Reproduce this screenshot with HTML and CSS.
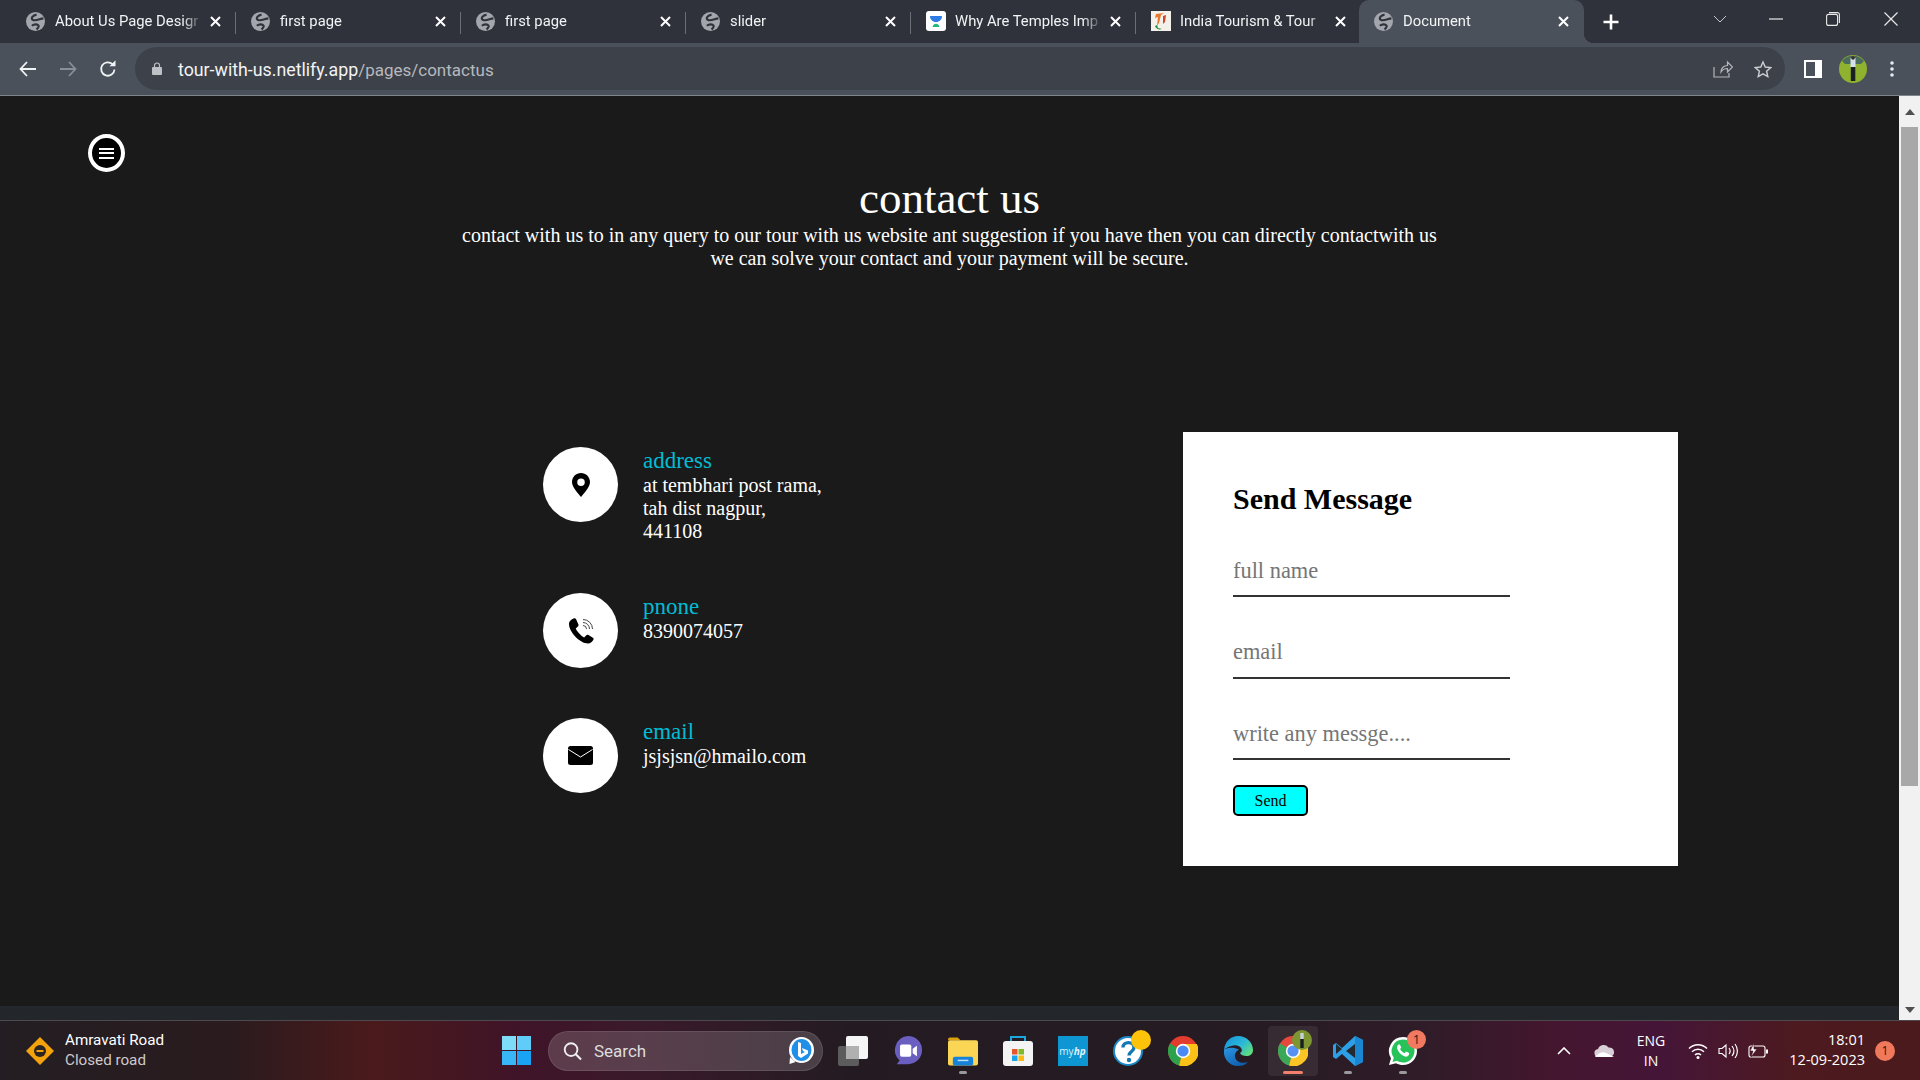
FILE: index.html
```html
<!DOCTYPE html>
<html lang="en">
<head>
  <meta charset="UTF-8" />
  <meta name="viewport" content="width=device-width, initial-scale=1" />
  <title>Document</title>
  <link rel="stylesheet" href="styles.css">
</head>
<body>
  <svg class="defs" width="0" height="0">
    <defs>
      <linearGradient id="edgeTop" x1="0" y1="0" x2="1" y2="0.700">
        <stop offset="0" stop-color="#1590dc"/>
        <stop offset="0.600" stop-color="#2bb8d8"/>
        <stop offset="1" stop-color="#5fdc80"/>
      </linearGradient>
      <linearGradient id="edgeLow" x1="0" y1="0" x2="0.800" y2="1">
        <stop offset="0" stop-color="#2a96e4"/>
        <stop offset="1" stop-color="#0d5aa8"/>
      </linearGradient>
    </defs>
    <symbol id="globe" viewBox="0 0 18 18">
      <circle cx="9" cy="9" r="9" fill="#a3a7ad"/>
      <path d="M10 2.500C6.500 3 4 6 6.500 7.500S13 6.500 16.500 6M5.500 13c2.500-2 5.500-1.500 6.500 0 .5 1-1 2.500-2 3.500" stroke="#2f323b" stroke-width="2" fill="none"/>
    </symbol>
    <symbol id="close" viewBox="0 0 11 11">
      <path d="M1 1l9 9M10 1l-9 9" stroke="#fff" stroke-width="2" fill="none"/>
    </symbol>
    <symbol id="chrome" viewBox="0 0 30 30">
      <circle cx="15" cy="15" r="15" fill="#e33b2e"/>
      <path d="M15 15L2 7.500A15 15 0 0 0 11 29.500z" fill="#2ba24c"/>
      <path d="M15 8h13.800A15 15 0 0 1 11 29.500L15 15z" fill="#fbc116"/>
      <circle cx="15" cy="15" r="7.200" fill="#fff"/>
      <circle cx="15" cy="15" r="5.600" fill="#4a8af4"/>
    </symbol>
  </svg>

  <div class="tabstrip">
    <div class="tab">
      <svg class="favicon"><use href="#globe"/></svg>
      <span class="tab-title">About Us Page Desigr</span>
      <svg class="tab-close"><use href="#close"/></svg>
    </div>
    <div class="tab">
      <svg class="favicon"><use href="#globe"/></svg>
      <span class="tab-title">first page</span>
      <svg class="tab-close"><use href="#close"/></svg>
    </div>
    <div class="tab">
      <svg class="favicon"><use href="#globe"/></svg>
      <span class="tab-title">first page</span>
      <svg class="tab-close"><use href="#close"/></svg>
    </div>
    <div class="tab">
      <svg class="favicon"><use href="#globe"/></svg>
      <span class="tab-title">slider</span>
      <svg class="tab-close"><use href="#close"/></svg>
    </div>
    <div class="tab">
      <svg class="favicon favicon-big" viewBox="0 0 20 20">
        <rect width="20" height="20" rx="3" fill="#fff"/>
        <path d="M4 5h12c0 3.500-2.500 6-6 6s-6-2.500-6-6z" fill="#2f7be6"/>
        <path d="M6.500 16c0.500-2 2-3.200 3.500-3.200s3 1.200 3.500 3.200z" fill="#1fb978"/>
      </svg>
      <span class="tab-title">Why Are Temples Imp</span>
      <svg class="tab-close"><use href="#close"/></svg>
    </div>
    <div class="tab tab-last">
      <svg class="favicon favicon-big" viewBox="0 0 20 20">
        <rect width="20" height="20" fill="#f4f1ea"/>
        <path d="M5 3l8-1-3 2-2 8-2 3 1-9-3 1z" fill="#e8762c"/>
        <path d="M12 5l3-1-1 7-2 2z" fill="#c9472b"/>
        <path d="M4 15c1 3 4 4 7 3l-4-1-1-3z" fill="#2d8c3c"/>
      </svg>
      <span class="tab-title">India Tourism &amp; Tour</span>
      <svg class="tab-close"><use href="#close"/></svg>
    </div>
    <div class="tab tab-active">
      <svg class="favicon"><use href="#globe"/></svg>
      <span class="tab-title">Document</span>
      <svg class="tab-close"><use href="#close"/></svg>
    </div>
    <svg class="new-tab" viewBox="0 0 16 16"><path d="M8 0.500v15M0.500 8h15" stroke="#fff" stroke-width="2.600" fill="none"/></svg>
    <div class="window-controls">
      <svg class="win-chevron" viewBox="0 0 14 8"><path d="M1 1l6 6 6-6" stroke="#c4c7cc" fill="none"/></svg>
      <svg class="win-min" viewBox="0 0 14 2"><path d="M0 1h14" stroke="#e8e8e8" stroke-width="1.200"/></svg>
      <svg class="win-restore" viewBox="0 0 14 14"><rect x="0.600" y="2.400" width="11" height="11" rx="2" fill="none" stroke="#e8e8e8" stroke-width="1.100"/><path d="M3 0.600h8.400a2 2 0 0 1 2 2V11" fill="none" stroke="#e8e8e8" stroke-width="1.100"/></svg>
      <svg class="win-close" viewBox="0 0 14 14"><path d="M0.500 0.500l13 13M13.500 0.500l-13 13" stroke="#e8e8e8" stroke-width="1.200"/></svg>
    </div>
  </div>

  <div class="toolbar">
    <div class="nav-buttons">
      <svg viewBox="0 0 18 16"><path d="M8 1L1.500 8 8 15M1.500 8H17" stroke="#f1f3f4" stroke-width="1.800" fill="none"/></svg>
      <svg class="nav-off" viewBox="0 0 18 16"><path d="M10 1l6.500 7-6.500 7M16.500 8H1" stroke="#8a8e95" stroke-width="1.800" fill="none"/></svg>
      <svg viewBox="0 0 18 18"><path d="M15.500 9.500A6.700 6.700 0 1 1 13.500 4.200" stroke="#f1f3f4" stroke-width="1.800" fill="none"/><path d="M10.500 6.200h6v-6z" fill="#f1f3f4"/></svg>
    </div>
    <div class="omnibox">
      <svg class="lock" viewBox="0 0 10 13"><path d="M2.500 6V3.500a2.500 2.500 0 0 1 5 0V6" stroke="#bdc1c6" stroke-width="1.200" fill="none"/><rect y="5" width="10" height="8" rx="1" fill="#bdc1c6"/></svg>
      <span class="url">tour-with-us.netlify.app<span class="url-path">/pages/contactus</span></span>
      <svg class="omni-share" viewBox="0 0 20 18"><path d="M1 7v10h15v-4M8 12c0-4 3-6.500 6.500-6.500V2l5 5-5 5V8.500C12 8.500 9.500 9.500 8 12z" stroke="#b4b7bc" stroke-width="1.200" fill="none"/></svg>
      <svg class="omni-star" viewBox="0 0 20 19"><path d="M10 1.800l2.500 5.500 6 .7-4.500 4 1.300 5.900-5.300-3-5.300 3L6 12l-4.500-4 6-.7z" stroke="#c9ccd0" stroke-width="1.600" fill="none"/></svg>
    </div>
    <svg class="side-panel" viewBox="0 0 18 18"><rect width="18" height="18" fill="#fff"/><rect x="2" y="2" width="9" height="14" fill="#4b515b"/></svg>
    <svg class="avatar" viewBox="0 0 28 28">
      <circle cx="14" cy="14" r="14" fill="#8fb32e"/>
      <path d="M3 6a14 14 0 0 1 22 0l-3 3H6z" fill="#4b6b5c"/>
      <rect x="11.500" y="3" width="5" height="9" fill="#d5e2ee"/>
      <circle cx="14" cy="3" r="1.800" fill="#3a2a22"/>
      <rect x="11.800" y="12" width="4.500" height="14" fill="#1a1f22"/>
    </svg>
    <svg class="kebab" viewBox="0 0 4 16"><circle cx="2" cy="2" r="1.800" fill="#e8eaed"/><circle cx="2" cy="8" r="1.800" fill="#e8eaed"/><circle cx="2" cy="14" r="1.800" fill="#e8eaed"/></svg>
  </div>

  <div class="viewport">
    <main class="page">
      <button class="menu-toggle" aria-label="menu"><span></span><span></span><span></span></button>

      <div class="intro">
        <h1>contact us</h1>
        <p>contact with us to in any query to our tour with us website ant suggestion if you have then you can directly contactwith us<br>we can solve your contact and your payment will be secure.</p>
      </div>

      <div class="contact">
        <div class="info">
          <div class="info-item">
            <div class="info-icon">
              <svg viewBox="0 0 24 32" class="icon-pin"><path fill-rule="evenodd" d="M12 0C5.400 0 0 5.300 0 12c0 7 8 15 12 20 4-5 12-13 12-20C24 5.300 18.600 0 12 0zm0 7.200a5 5 0 1 1 0 10 5 5 0 0 1 0-10z"/></svg>
            </div>
            <div class="info-text">
              <h3>address</h3>
              <p>at tembhari post rama,<br>tah dist nagpur,<br>441108</p>
            </div>
          </div>
          <div class="info-item">
            <div class="info-icon">
              <svg viewBox="0 0 26 26" class="icon-phone">
                <path d="M5.500 0.500c-2 1-4.500 2.500-4.500 5.500 0 8 11 19.500 19 19.500 2.500 0 4.500-2 5.500-4 0.500-1-0.300-1.500-1-2l-4-2.500c-1-0.600-1.700-0.300-2.400 0.400l-2 2c-3-1.500-7-6-8.400-9l2.200-2c0.700-0.700 0.800-1.400 0.400-2.200L8 1c-0.600-1-1.500-1-2.500-0.500z"/>
                <path d="M15 7.500a3.500 3.500 0 0 1 3.500 3.500M15 4.500a6.500 6.500 0 0 1 6.500 6.500M15 1.500a9.500 9.500 0 0 1 9.500 9.500" fill="none" stroke="#444" stroke-width="1"/>
              </svg>
            </div>
            <div class="info-text">
              <h3>pnone</h3>
              <p>8390074057</p>
            </div>
          </div>
          <div class="info-item">
            <div class="info-icon">
              <svg viewBox="0 0 25 19" class="icon-mail"><rect width="25" height="19" rx="2.500"/><path d="M0.500 3.500l12 7.500 12-7.500" fill="none" stroke="#fff" stroke-width="1"/></svg>
            </div>
            <div class="info-text">
              <h3>email</h3>
              <p>jsjsjsn@hmailo.com</p>
            </div>
          </div>
        </div>

        <form class="message-card">
          <h2>Send Message</h2>
          <input type="text" placeholder="full name" />
          <input type="text" placeholder="email" />
          <input type="text" placeholder="write any messge...." />
          <button type="button" class="send-btn">Send</button>
        </form>
      </div>

      <div class="page-foot"></div>
    </main>

    <div class="scrollbar">
      <div class="scroll-btn"><span class="arrow-up"></span></div>
      <div class="scroll-track"><div class="scroll-thumb"></div></div>
      <div class="scroll-btn scroll-btn-down"><span class="arrow-down"></span></div>
    </div>
  </div>

  <footer class="taskbar">
    <div class="widget">
      <svg class="widget-icon" viewBox="0 0 28 28">
        <path d="M14 0l14 14-14 14L0 14z" fill="#f5a30c"/>
        <circle cx="14" cy="14" r="6" fill="#2b2420"/>
        <rect x="10.500" y="13" width="7" height="2" fill="#f5a30c"/>
      </svg>
      <div class="widget-text">
        <div>Amravati Road</div>
        <div class="widget-sub">Closed road</div>
      </div>
    </div>

    <svg class="start" viewBox="0 0 29 29">
      <rect width="14" height="14" fill="#7fdcf8"/>
      <rect x="15" width="14" height="14" fill="#5fcdf8"/>
      <rect y="15" width="14" height="14" fill="#38b6f5"/>
      <rect x="15" y="15" width="14" height="14" fill="#1aa3f2"/>
    </svg>

    <div class="search">
      <svg class="search-glass" viewBox="0 0 20 20"><circle cx="8.500" cy="8.500" r="6.700" stroke="#eee" stroke-width="2" fill="none"/><path d="M13.500 13.500l5.500 5.500" stroke="#eee" stroke-width="2.200"/></svg>
      <span>Search</span>
      <svg class="search-bing" viewBox="0 0 25 28">
        <ellipse cx="12.500" cy="13" rx="12.500" ry="13" fill="#fff"/>
        <path d="M1 20l-0.500 7 6-2z" fill="#fff"/>
        <ellipse cx="12.500" cy="13" rx="10" ry="11" fill="#1f8fe8"/>
        <path d="M9 5l3 1v11l4-2-2-1-1-3 6 2.500v3L12 21l-3-2z" fill="#fff"/>
      </svg>
    </div>

    <div class="apps">
      <div class="app">
        <svg viewBox="0 0 30 30"><rect x="0" y="10" width="21" height="20" rx="2" fill="#5c5c5c"/><rect x="8" y="0" width="22" height="23" rx="2" fill="#f5f5f5"/><rect x="8" y="10" width="13" height="13" fill="#b0b0b0"/></svg>
      </div>
      <div class="app">
        <svg viewBox="0 0 30 32"><path d="M15 0a15 15 0 0 1 0 30H3l3-4A15 15 0 0 1 15 0z" fill="#6a5fc0"/><rect x="6.500" y="9" width="12" height="13" rx="2" fill="#fff"/><path d="M20 13.500l4.500-3v11l-4.500-3z" fill="#fff"/></svg>
      </div>
      <div class="app app-open">
        <svg viewBox="0 0 31 30"><path d="M0 3a2 2 0 0 1 2-2h8l3 3H0z" fill="#d9a00f"/><rect y="4" width="31" height="26" rx="2" fill="#fbd655"/><rect x="5" y="21" width="21" height="9" rx="2" fill="#1683d8"/><rect x="10" y="24" width="11" height="1.500" fill="#bfe2fa"/></svg>
      </div>
      <div class="app">
        <svg viewBox="0 0 30 30"><path d="M8 6V1h14v5" fill="none" stroke="#1aa7e0" stroke-width="2"/><rect y="5" width="30" height="25" rx="3" fill="#f4f4f4"/><rect x="9" y="13" width="5.500" height="5.500" fill="#e8542c"/><rect x="15.500" y="13" width="5.500" height="5.500" fill="#7fba2a"/><rect x="9" y="19.500" width="5.500" height="5.500" fill="#1aa3ea"/><rect x="15.500" y="19.500" width="5.500" height="5.500" fill="#fdb90f"/></svg>
      </div>
      <div class="app">
        <div class="myhp">my<em>hp</em></div>
      </div>
      <div class="app">
        <svg viewBox="0 0 30 30"><circle cx="15" cy="15" r="14" fill="#fff" stroke="#1a88c8" stroke-width="2"/><path d="M10 11.500c0-6.500 11-6.500 11 0 0 4-5 4-5 8" fill="none" stroke="#1278b4" stroke-width="3.400"/><circle cx="16" cy="24" r="2.200" fill="#1278b4"/></svg>
        <span class="app-dot"></span>
      </div>
      <div class="app">
        <svg><use href="#chrome"/></svg>
      </div>
      <div class="app">
        <svg viewBox="0 0 30 30">
          <path d="M1 14C2 5 8 0 15 0c9 0 15 7 15 14 0 4-3 6-6.500 6-3 0-6-1-6.500-3 2-1 2.500-3 1-5-2-3-6-3.500-10-2-3 1-6 2-7 4z" fill="url(#edgeTop)"/>
          <path d="M1 14c-1 8 5 16 14 16 4 0 7-1 10-4-6 2-12 0-13-5-.6-3 1-6 4-7.500C10 10.500 2 12 1 14z" fill="url(#edgeLow)"/>
        </svg>
      </div>
      <div class="app app-active">
        <svg><use href="#chrome"/></svg>
        <svg class="app-avatar" viewBox="0 0 20 20"><circle cx="10" cy="10" r="10" fill="#7d9631"/><rect x="8.300" y="3" width="3.400" height="6" fill="#c5d2dc"/><rect x="8.300" y="9" width="3.400" height="9" fill="#1a1f22"/></svg>
      </div>
      <div class="app app-open">
        <svg viewBox="0 0 30 30"><path d="M22 0l8 4v22l-8 4-13-12-6 5-3-2v-12l3-2 6 5z" fill="#2c9fe6"/><path d="M22 8l-9 7 9 7z" fill="#24292f"/><path d="M22 0l8 4v22l-8 4z" fill="#1a85d0"/><path d="M3 8l6 5-6 5z" fill="#24292f"/></svg>
      </div>
      <div class="app app-open">
        <svg viewBox="0 0 30 30"><path d="M15 1a14 14 0 0 1 0 28c-2.500 0-5-.6-7-1.800L1 29l2-6.700A14 14 0 0 1 15 1z" fill="#fff"/><path d="M15 3.500a11.500 11.500 0 0 1 0 23c-2.200 0-4.300-.6-6-1.700l-4.500 1.200 1.300-4.300A11.500 11.500 0 0 1 15 3.500z" fill="#27c35a"/><path d="M10.500 8.500c-1.500 1-2 3-1 5 1.500 3.500 4.500 6 7.500 7 2 .5 3.500-.5 4-2l.2-1.500-3.200-1.500-1.400 1.700c-2-.8-3.500-2.300-4.500-4.300l1.200-1.400L11.800 8.500z" fill="#fff"/></svg>
        <span class="app-badge">1</span>
      </div>
    </div>

    <div class="tray">
      <svg class="tray-up" viewBox="0 0 14 8"><path d="M1 7l6-6 6 6" stroke="#fff" stroke-width="1.600" fill="none"/></svg>
      <svg class="tray-cloud" viewBox="0 0 20 13"><path d="M5 13a4 4 0 0 1-1-8 6 6 0 0 1 10.500-1.500A4.500 4.500 0 0 1 16 13z" fill="#d8d0d6"/><path d="M1 13c3-4 8-6 11-4l8 4z" fill="#fff"/></svg>
      <div class="tray-lang">ENG<br>IN</div>
      <svg class="tray-wifi" viewBox="0 0 20 16"><path d="M1 5.500c5-5 13-5 18 0M4 8.800c3.500-3.500 8.500-3.500 12 0M7 12c1.700-1.700 4.300-1.700 6 0" fill="none" stroke="#fff" stroke-width="1.500"/><circle cx="10" cy="14.500" r="1.500" fill="#fff"/></svg>
      <svg class="tray-sound" viewBox="0 0 20 16"><path d="M1 5.500h3L8 2v12l-4-3.500H1z" fill="none" stroke="#fff" stroke-width="1.100"/><path d="M11 5c1.400 1.800 1.400 4.200 0 6M14 3c2.400 3 2.400 7 0 10M17 1c3.200 4 3.200 10 0 14" fill="none" stroke="#fff" stroke-width="1.200"/></svg>
      <svg class="tray-battery" viewBox="0 0 20 16"><rect x="1" y="3" width="16" height="11" rx="2" fill="none" stroke="#fff" stroke-width="1.100"/><rect x="18" y="6.500" width="2" height="4" fill="#fff"/><path d="M6 0L2 8h3l-2 6 6-8H6z" fill="#fff" stroke="#3f1526" stroke-width="0.600"/></svg>
      <div class="tray-clock">18:01<br>12-09-2023</div>
      <span class="tray-badge">1</span>
    </div>
  </footer>
</body>
</html>
```

FILE: styles.css
```css
* {
  box-sizing: border-box;
}
html, body {
  height: 100%;
}
body {
  margin: 0;
  display: flex;
  flex-direction: column;
  height: 1080px;
  overflow: hidden;
  font-family: "Liberation Serif", serif;
  background: #1a1a1a;
}
.defs {
  position: absolute;
}

/* browser tabs */
.tabstrip {
  height: 43px;
  flex: none;
  display: flex;
  align-items: center;
  padding-left: 11px;
  background: #2f323b;
  font-family: Roboto, sans-serif;
  font-size: 14.800px;
  color: #f1f3f4;
}
.tab {
  position: relative;
  width: 225px;
  height: 43px;
  flex: none;
  display: flex;
  align-items: center;
  padding: 0 15px 1px;
}
.tab::after {
  content: "";
  position: absolute;
  right: 0;
  top: 12px;
  width: 1px;
  height: 22px;
  background: #6a6e76;
}
.tab-last::after {
  display: none;
}
.tab-active {
  margin-left: -2px;
  background: #4b515b;
  border-radius: 10px 10px 0 0;
}
.tab-active::after {
  display: none;
}
.tab-active::before {
  content: "";
  position: absolute;
  left: 100%;
  bottom: 0;
  width: 10px;
  height: 10px;
  background: radial-gradient(circle at 100% 0, transparent 10px, #4b515b 10.500px);
}
.favicon {
  width: 19px;
  height: 19px;
  flex: none;
  margin-right: 10px;
}
.favicon-big {
  width: 20px;
  height: 20px;
  margin-right: 9px;
}
.tab-title {
  flex: 1;
  min-width: 0;
  white-space: nowrap;
  overflow: hidden;
  -webkit-mask-image: linear-gradient(to right, #000 86%, transparent 99%);
  mask-image: linear-gradient(to right, #000 86%, transparent 99%);
}
.tab-close {
  width: 11px;
  height: 11px;
  flex: none;
  margin-left: 6px;
}
.new-tab {
  width: 16px;
  height: 16px;
  margin-left: 19px;
}
.window-controls {
  margin-left: auto;
  display: flex;
  align-items: center;
  height: 100%;
  padding-right: 22px;
  padding-bottom: 6px;
}
.win-chevron {
  width: 14px;
  height: 8px;
  margin-right: 42px;
}
.win-min {
  width: 14px;
  height: 2px;
  margin-right: 43px;
}
.win-restore {
  width: 14px;
  height: 14px;
  margin-right: 44px;
}
.win-close {
  width: 14px;
  height: 14px;
}

/* address bar */
.toolbar {
  height: 53px;
  flex: none;
  display: flex;
  align-items: center;
  padding: 0 27px 1px 19px;
  background: #4b515b;
  border-bottom: 1px solid #80848b;
}
.nav-buttons {
  display: flex;
  align-items: center;
  gap: 22px;
  width: 116px;
  flex: none;
}
.nav-buttons svg {
  width: 18px;
  height: 18px;
}
.omnibox {
  width: 1650px;
  height: 43px;
  flex: none;
  display: flex;
  align-items: center;
  padding: 0 13px 0 17px;
  background: #3d4149;
  border-radius: 22px;
  font-family: Roboto, sans-serif;
  font-size: 17.800px;
  color: #f1f3f4;
}
.lock {
  width: 10px;
  height: 13px;
  margin-right: 16px;
}
.url {
  flex: 1;
  padding-top: 2px;
}
.url-path {
  font-size: 17px;
  color: #b6b9be;
}
.omni-share {
  width: 20px;
  height: 18px;
  margin-right: 21px;
}
.omni-star {
  width: 18px;
  height: 18px;
}
.side-panel {
  width: 18px;
  height: 18px;
  flex: none;
  margin-left: 19px;
}
.avatar {
  width: 28px;
  height: 28px;
  flex: none;
  margin-left: 17px;
}
.kebab {
  width: 4px;
  height: 16px;
  flex: none;
  margin-left: 23px;
}

/* page */
.viewport {
  flex: 1;
  min-height: 0;
  display: flex;
}
.page {
  position: relative;
  flex: 1;
  display: flex;
  flex-direction: column;
  background: #1a1a1a;
  color: #fff;
}
.menu-toggle {
  position: absolute;
  left: 88px;
  top: 38px;
  width: 37px;
  height: 38px;
  padding: 0;
  display: flex;
  flex-direction: column;
  align-items: center;
  justify-content: center;
  gap: 2.500px;
  background: #000;
  border: 4px solid #fff;
  border-radius: 50%;
}
.menu-toggle span {
  display: block;
  width: 15px;
  height: 2px;
  background: #fff;
}
.intro {
  padding-top: 76px;
  text-align: center;
}
.intro h1 {
  margin: 0;
  font-size: 45px;
  font-weight: normal;
  line-height: 52px;
}
.intro p {
  margin: 0;
  font-size: 20px;
  line-height: 23px;
}
.contact {
  display: flex;
  align-items: flex-start;
  margin-top: 162px;
  padding-left: 543px;
}
.info {
  width: 640px;
  flex: none;
  padding-top: 15px;
  display: flex;
  flex-direction: column;
  gap: 50px;
}
.info-item {
  display: flex;
  gap: 25px;
}
.info-icon {
  width: 75px;
  height: 75px;
  flex: none;
  display: flex;
  align-items: center;
  justify-content: center;
  background: #fff;
  border-radius: 50%;
}
.icon-pin {
  width: 18px;
  height: 24px;
}
.icon-phone {
  width: 26px;
  height: 26px;
}
.icon-mail {
  width: 25px;
  height: 19px;
}
.info-text {
  padding-top: 1px;
}
.info-text h3 {
  margin: 0;
  font-size: 23px;
  font-weight: normal;
  line-height: 26px;
  color: #00bcd4;
}
.info-text p {
  margin: 0;
  font-size: 20px;
  line-height: 23px;
}
.message-card {
  width: 495px;
  flex: none;
  padding: 49px 50px 50px;
  background: #fff;
  color: #000;
}
.message-card h2 {
  margin: 0 0 35px;
  font-size: 30px;
  line-height: 35px;
}
.message-card input {
  display: block;
  width: 277px;
  height: 46px;
  margin: 0 0 35.500px;
  padding: 0 0 5px;
  border: 0;
  border-bottom: 2px solid #333;
  outline: none;
  font-family: inherit;
  font-size: 22.400px;
}
.message-card input::placeholder {
  color: #757575;
}
.message-card input:last-of-type {
  margin-bottom: 25px;
}
.send-btn {
  display: block;
  width: 75px;
  height: 31px;
  padding: 0;
  background: #00ffff;
  border: 2px solid #000;
  border-radius: 5px;
  font-family: inherit;
  font-size: 16px;
  color: #000;
}
.page-foot {
  margin-top: auto;
  height: 14px;
  background: #23262b;
}

/* scrollbar */
.scrollbar {
  width: 21px;
  flex: none;
  display: flex;
  flex-direction: column;
  background: #f1f1f1;
}
.scroll-btn {
  height: 31px;
  flex: none;
  display: flex;
  align-items: center;
  justify-content: center;
}
.scroll-btn-down {
  height: 20px;
}
.arrow-up {
  border: 5px solid transparent;
  border-top: 0;
  border-bottom: 6px solid #505050;
}
.arrow-down {
  border: 5px solid transparent;
  border-bottom: 0;
  border-top: 6px solid #505050;
}
.scroll-track {
  flex: 1;
  padding: 0 2px;
}
.scroll-thumb {
  height: 659px;
  background: #a8a8a8;
}

/* windows taskbar */
.taskbar {
  height: 60px;
  flex: none;
  display: flex;
  align-items: center;
  border-top: 1px solid #4d4a4d;
  background: linear-gradient(to right, #231e23 0, #2a1b1e 230px, #4a1a1b 370px, #3f1428 520px, #3a1a2a 640px, #241b22 850px, #261b22 1250px, #2f1c28 1420px, #45162f 1560px, #451538 1660px, #4d1a1f 1800px, #4a1a1c 1920px);
  font-family: "Open Sans", sans-serif;
  color: #fff;
}
.widget {
  width: 502px;
  flex: none;
  display: flex;
  align-items: center;
  padding-left: 26px;
}
.widget-icon {
  width: 28px;
  height: 28px;
  margin-right: 11px;
}
.widget-text {
  padding-bottom: 2px;
  font-size: 15.200px;
  line-height: 20px;
  font-family: Roboto, sans-serif;
}
.widget-sub {
  color: #cfc9cb;
}
.start {
  width: 29px;
  height: 29px;
  flex: none;
}
.search {
  width: 275px;
  height: 40px;
  flex: none;
  margin-left: 17px;
  display: flex;
  align-items: center;
  padding: 0 8px 0 14px;
  background: rgba(255, 255, 255, 0.16);
  border: 1px solid rgba(255, 255, 255, 0.1);
  border-radius: 20px;
  font-family: Roboto, sans-serif;
  font-size: 17px;
  color: #ddd;
}
.search-glass {
  width: 19px;
  height: 20px;
  margin-right: 12px;
}
.search span {
  flex: 1;
}
.search-bing {
  width: 25px;
  height: 28px;
}
.apps {
  flex: none;
  margin-left: 2px;
  display: flex;
}
.app {
  position: relative;
  width: 55px;
  height: 50px;
  display: flex;
  align-items: center;
  justify-content: center;
}
.app svg {
  width: 30px;
  height: 30px;
}
.app-open::after, .app-active::after {
  content: "";
  position: absolute;
  left: 50%;
  bottom: 2px;
  width: 8px;
  height: 3px;
  margin-left: -4px;
  border-radius: 2px;
  background: #9a9a9a;
}
.app-active::before {
  content: "";
  position: absolute;
  left: 2.500px;
  right: 2.500px;
  top: 0;
  bottom: 0;
  background: rgba(255, 255, 255, 0.07);
  border-radius: 4px;
}
.app-active::after {
  width: 20px;
  margin-left: -10px;
  background: #f47f6a;
}
.app .app-avatar {
  position: absolute;
  left: 27px;
  top: 4px;
  width: 20px;
  height: 20px;
}
.app-dot {
  position: absolute;
  left: 31px;
  top: 4px;
  width: 20px;
  height: 20px;
  border-radius: 50%;
  background: #fdc30b;
}
.app-badge {
  position: absolute;
  left: 32px;
  top: 4px;
  width: 19px;
  height: 19px;
  border-radius: 50%;
  background: #f0795f;
  font-size: 13px;
  line-height: 19px;
  text-align: center;
  color: #222;
}
.myhp {
  width: 30px;
  height: 30px;
  background: #0d96d2;
  font-family: "Open Sans", sans-serif;
  font-size: 10px;
  line-height: 30px;
  text-align: center;
  color: #dff2fb;
}
.myhp em {
  font-weight: bold;
}
.tray {
  margin-left: auto;
  display: flex;
  align-items: center;
  padding-right: 25px;
  font-size: 14px;
  line-height: 20px;
}
.tray svg {
  flex: none;
}
.tray-up {
  width: 14px;
  height: 8px;
  margin-right: 23px;
}
.tray-cloud {
  width: 20px;
  height: 13px;
  margin-right: 21px;
}
.tray-lang {
  width: 32px;
  text-align: center;
  margin-right: 21px;
}
.tray-wifi, .tray-sound, .tray-battery {
  width: 20px;
  height: 16px;
}
.tray-sound {
  margin: 0 10px;
}
.tray-clock {
  width: 97px;
  padding-bottom: 2px;
  text-align: right;
  font-size: 14.500px;
}
.tray-badge {
  width: 20px;
  height: 20px;
  margin-left: 10px;
  border-radius: 50%;
  background: #f0795b;
  font-size: 12px;
  line-height: 20px;
  text-align: center;
  color: #2a1515;
}
```
